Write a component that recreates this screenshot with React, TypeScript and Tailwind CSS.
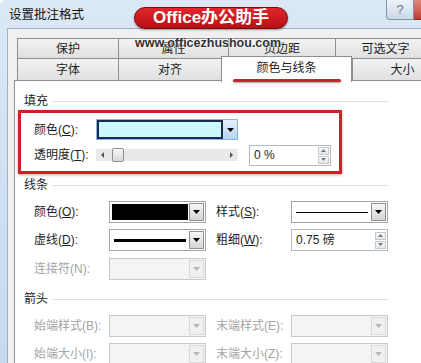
import type { ReactNode } from "react";

const FONT = "font-['Liberation_Sans','Noto_Sans_CJK_SC',sans-serif]";

function Arrow({ color = "#000" }: { color?: string }) {
  return (
    <svg width="7" height="4" viewBox="0 0 7 4">
      <path d="M0 0h7L3.5 4z" fill={color} />
    </svg>
  );
}

function Lbl({ text, k, dim, w = "w-[75px]" }: { text: string; k: string; dim?: boolean; w?: string }) {
  return (
    <div className={`${w} shrink-0 text-[12px] ${dim ? "text-[#a3a3a3]" : "text-[#1e1e1e]"}`}>
      {text}(<span className={dim ? "" : "underline"}>{k}</span>):
    </div>
  );
}

function Combo({ dim, children }: { dim?: boolean; children?: ReactNode }) {
  return (
    <div
      className={`flex h-[22px] w-[97px] shrink-0 border p-[1px] ${
        dim ? "border-[#c9c9c9] bg-[#f4f4f4]" : "border-[#a5a5a5] bg-white"
      }`}
    >
      <div className="flex min-w-0 flex-1 items-center">{children}</div>
      <div
        className={`flex w-[15px] items-center justify-center border ${
          dim
            ? "border-[#d9d9d9] bg-[#f0f0f0]"
            : "border-[#8e8f8f] bg-gradient-to-b from-[#f6f6f6] to-[#d4d4d4]"
        }`}
      >
        <Arrow color={dim ? "#b9b9b9" : "#000"} />
      </div>
    </div>
  );
}

function Spinner() {
  return (
    <div className="flex w-[11px] flex-col gap-[1px]">
      <div className="flex h-[8px] items-center justify-center border border-[#c6c9cf] bg-gradient-to-b from-[#fafafa] to-[#e4e6ea]">
        <svg width="5" height="3" viewBox="0 0 5 3">
          <path d="M0 3h5L2.5 0z" fill="#6b7a8c" />
        </svg>
      </div>
      <div className="flex h-[8px] items-center justify-center border border-[#c6c9cf] bg-gradient-to-b from-[#fafafa] to-[#e4e6ea]">
        <svg width="5" height="3" viewBox="0 0 5 3">
          <path d="M0 0h5L2.5 3z" fill="#6b7a8c" />
        </svg>
      </div>
    </div>
  );
}

function Header({ text }: { text: string }) {
  return (
    <div className="flex h-[18px] w-[365px] items-center gap-[4px] text-[12px] text-[#1e1e1e]">
      <span>{text}</span>
      <div className="h-px flex-1 bg-[#dde1e6]" />
    </div>
  );
}

function Tab({ label, w, selected, h = "h-[20px]" }: { label: string; w: string; selected?: boolean; h?: string }) {
  return (
    <div
      className={`flex shrink-0 border-l border-t border-[#8c8e94] text-[12px] text-[#1e1e1e] ${w} ${h} ${
        selected
          ? "relative z-10 -mt-[2px] mb-[-2px] flex-col items-center border-r bg-white"
          : "items-center justify-center bg-gradient-to-b from-[#f3f3f3] to-[#e0e0e0]"
      }`}
    >
      {selected ? (
        <>
          <span className="mt-[4px] leading-[15px]">{label}</span>
          <div className="mt-[3px] h-[3px] w-[108px] rounded-full bg-[#c5262e] shadow-[0_1px_2px_rgba(0,0,0,0.35)]" />
        </>
      ) : (
        label
      )}
    </div>
  );
}

export default function App() {
  return (
    <div className={`relative flex h-[363px] w-[421px] flex-col overflow-hidden rounded-tl-[6px] bg-gradient-to-b from-[#dbe8f6] to-[#c6d9ef] ${FONT}`}>
      {/* title bar */}
      <div className="flex h-[28px] shrink-0 items-start">
        <div className="mt-[6px] pl-[9px] text-[12.5px] text-[#111]">设置批注格式</div>
        <div className="flex-1" />
        <div className="flex h-[20px] w-[28px] items-center justify-center rounded-bl-[4px] border border-t-0 border-[#8093ad] bg-gradient-to-b from-[#eef3f9] to-[#cdd8e6] text-[13px] text-[#6d7a8a]">
          ?
        </div>
        <div className="h-[20px] w-[7px] border-b border-[#8a2a20] bg-gradient-to-b from-[#e0897c] to-[#c23a2c]" />
      </div>

      {/* dialog body */}
      <div className="ml-[7px] flex flex-1 flex-col border-l border-t border-[#9fb2cb] bg-[#f0f0f0] pl-[6px] pt-[9px]">
        <div className="ml-[3px] flex">
          <Tab label="保护" w="w-[101px]" />
          <Tab label="属性" w="w-[110px]" />
          <Tab label="页边距" w="w-[107px]" />
          <Tab label="可选文字" w="w-[100px]" />
        </div>
        <div className="ml-[3px] flex">
          <Tab label="字体" w="w-[101px]" h="h-[22px]" />
          <Tab label="对齐" w="w-[103px]" h="h-[22px]" />
          <Tab label="颜色与线条" w="w-[131px]" h="h-[26px]" selected />
          <Tab label="大小" w="w-[100px]" h="h-[22px]" />
        </div>

        {/* tab page */}
        <div className="flex flex-1 flex-col border-l border-t border-[#8c8e94] bg-white pl-[9px] pt-[11px]">
          <Header text="填充" />

          <div className="ml-[-6px] flex w-[324px] flex-col gap-[4px] border-[3px] border-[#cf1f29] pb-[5px] pl-[13px] pt-[6px] shadow-[0_1px_3px_rgba(120,0,0,0.35)]">
            <div className="flex h-[21px] items-center">
              <Lbl text="颜色" k="C" w="w-[62px]" />
              <div className="flex h-[21px] w-[142px] border border-[#86b6e6] bg-[#dcecfb]">
                <div className="flex-1 border-2 border-[#1b2b4d] bg-[#ccf8fd]" />
                <div className="flex w-[14px] items-center justify-center bg-gradient-to-b from-[#e4f1fd] to-[#b6d5f1]">
                  <Arrow />
                </div>
              </div>
            </div>
            <div className="flex h-[22px] items-center">
              <Lbl text="透明度" k="T" w="w-[62px]" />
              <div className="flex h-[12px] w-[142px] items-center justify-between bg-[#e9e9e9] px-[5px]">
                <div className="flex items-center gap-[8px]">
                  <svg width="3" height="6" viewBox="0 0 3 6">
                    <path d="M3 0v6L0 3z" fill="#555" />
                  </svg>
                  <div className="h-[14px] w-[12px] rounded-[2px] border border-[#8e8e8e] bg-gradient-to-b from-[#f8f8f8] to-[#d8d8d8]" />
                </div>
                <svg width="3" height="6" viewBox="0 0 3 6">
                  <path d="M0 0v6L3 3z" fill="#555" />
                </svg>
              </div>
              <div className="ml-[11px] flex h-[21px] w-[82px] items-center justify-between border border-[#b5b8bd] bg-white pl-[4px] pr-[1px]">
                <span className="text-[12px] text-[#1e1e1e]">0 %</span>
                <Spinner />
              </div>
            </div>
          </div>

          <div className="mt-[2px]">
            <Header text="线条" />
          </div>

          <div className="pl-[10px]">
            <div className="mt-[7px] flex h-[22px] items-center">
              <Lbl text="颜色" k="O" />
              <Combo>
                <div className="ml-[1px] h-[16px] w-[76px] bg-black" />
              </Combo>
              <div className="ml-[10px]">
                <Lbl text="样式" k="S" />
              </div>
              <Combo>
                <div className="mx-[3px] h-px flex-1 bg-black" />
              </Combo>
            </div>

            <div className="mt-[6px] flex h-[22px] items-center">
              <Lbl text="虚线" k="D" />
              <Combo>
                <div className="mx-[3px] h-[3px] flex-1 bg-black" />
              </Combo>
              <div className="ml-[10px]">
                <Lbl text="粗细" k="W" />
              </div>
              <div className="flex h-[22px] w-[97px] items-center justify-between border border-[#b5b8bd] bg-white pl-[4px] pr-[1px]">
                <span className="text-[12px] text-[#1e1e1e]">0.75 磅</span>
                <Spinner />
              </div>
            </div>

            <div className="mt-[7px] flex h-[22px] items-center">
              <Lbl text="连接符" k="N" dim />
              <Combo dim />
            </div>
          </div>

          <div className="mt-[10px]">
            <Header text="箭头" />
          </div>

          <div className="pl-[10px]">
            <div className="mt-[7px] flex h-[22px] items-center">
              <Lbl text="始端样式" k="B" dim />
              <Combo dim />
              <div className="ml-[10px]">
                <Lbl text="末端样式" k="E" dim />
              </div>
              <Combo dim />
            </div>
            <div className="mt-[6px] flex h-[22px] items-center">
              <Lbl text="始端大小" k="I" dim />
              <Combo dim />
              <div className="ml-[10px]">
                <Lbl text="末端大小" k="Z" dim />
              </div>
              <Combo dim />
            </div>
          </div>
        </div>
      </div>

      {/* watermark */}
      <div className="absolute left-[134px] top-[7px] flex h-[22px] w-[154px] items-center justify-center rounded-full border border-[#7a0a0e] bg-gradient-to-b from-[#e0262c] to-[#b80f16] text-[17px] font-bold text-white shadow-[0_1px_2px_rgba(0,0,0,0.4)]">
        Office办公助手
      </div>
      <div className="absolute left-[135px] top-[34px] text-[12.5px] font-bold text-[#333] [text-shadow:0_0_2px_#fff,0_0_2px_#fff]">
        www.officezhushou.com
      </div>
    </div>
  );
}
